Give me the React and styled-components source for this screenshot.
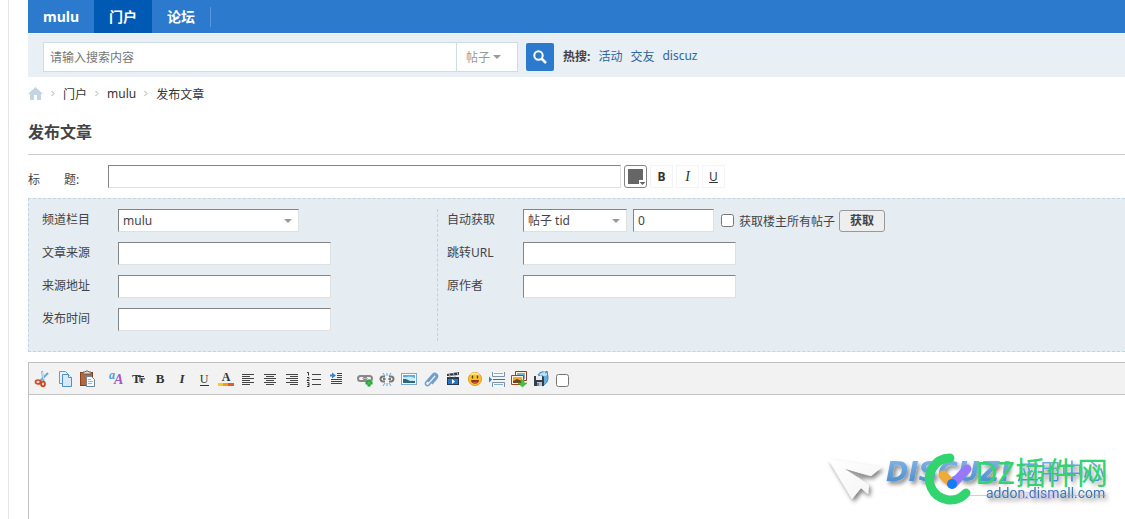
import React from 'react';
import styled, { createGlobalStyle } from 'styled-components';

const GlobalStyle = createGlobalStyle`
  * {
    box-sizing: border-box;
  }
  body {
    margin: 0;
    background: #fff;
    color: #444;
  }
  body, input, select, button {
    font-family: "Noto Sans", "Noto Sans CJK SC", sans-serif;
    font-size: 12px;
  }
  a {
    text-decoration: none;
  }
`;

const Page = styled.div`
  display: flex;
  flex-direction: column;
  min-height: 100vh;
  margin-left: 8px;
  padding-left: 19px;
  border-left: 1px solid #e5e5e5;
`;

const Nav = styled.nav`
  display: flex;
  height: 33px;
  background: #2b7acd;
`;
const NavLink = styled.a`
  padding: 0 15px;
  background: ${({ $active }) => ($active ? '#005ab4' : 'transparent')};
  color: #fff;
  font-size: 14px;
  font-weight: 700;
  line-height: 33px;
`;
const NavLine = styled.span`
  height: 20px;
  margin-top: 7px;
  border-left: 1px solid #5b97db;
`;

const SearchBar = styled.form`
  display: flex;
  align-items: center;
  height: 43px;
  margin-top: 1px;
  padding: 2px 15px 0;
  background: #e8eff5;
`;
const SearchBox = styled.div`
  display: flex;
  flex: 0 1 475px;
  height: 30px;
  border: 1px solid #cddde3;
  background: #fff;
`;
const SearchInput = styled.input`
  flex: 1;
  min-width: 0;
  padding: 2px 6px 0;
  border: 0;
  outline: none;
  background: none;

  &::placeholder {
    color: #757575;
  }
`;
const SelectWrap = styled.span`
  position: relative;
  display: block;
  width: ${({ $width }) => $width};

  &::after {
    content: '';
    position: absolute;
    top: 50%;
    right: ${({ $arrow }) => $arrow || '7px'};
    margin-top: -2px;
    border: 4px solid transparent;
    border-top-color: #999;
    border-bottom: 0;
    pointer-events: none;
  }
`;
const SearchType = styled.select`
  width: 100%;
  height: 28px;
  padding: 2px 9px 0;
  border: 0;
  border-left: 1px solid #cddde3;
  appearance: none;
  background: #fff;
  color: #999;
`;
const SearchBtn = styled.button`
  display: flex;
  align-items: center;
  justify-content: center;
  width: 28px;
  height: 28px;
  margin: 0 9px 0 8px;
  padding: 0;
  border: 0;
  border-radius: 2px;
  background: #2b7acd;
`;
const HotWords = styled.div`
  display: flex;
  gap: 8px;
  padding-bottom: 2px;
  white-space: nowrap;

  strong {
    color: #444;
  }
  a {
    color: #369;
  }
`;

const Crumbs = styled.nav`
  display: flex;
  align-items: center;
  gap: 8px;
  height: 33px;

  a {
    color: #333;
  }
  svg {
    display: block;
  }
`;
const Title = styled.h1`
  margin: 0;
  padding: 8px 0 7px;
  border-bottom: 1px solid #ccc;
  font-size: 16px;
  line-height: 29px;
`;

const TitleRow = styled.div`
  display: flex;
  align-items: center;
  gap: 3px;
  padding: 10px 0;

  label {
    flex: 0 0 77px;
    padding-top: 4px;
    white-space: pre;
  }
`;
const TextInput = styled.input`
  width: ${({ $width }) => $width || '213px'};
  max-width: 100%;
  height: 23px;
  padding: 0 4px;
  border: 1px solid;
  border-color: #848484 #e0e0e0 #e0e0e0 #848484;
  border-radius: 0;
  outline: none;
  background: #fff;
  color: #444;
`;
const TitleInput = styled(TextInput)`
  flex: 0 1 513px;
  min-width: 0;
`;
const ColorBtn = styled.button`
  width: 23px;
  height: 23px;
  padding: 0;
  border: 1px solid #848484;
  border-radius: 3px;
  background: #fff;

  svg {
    display: block;
  }
`;
const StyleBtn = styled.button`
  width: 23px;
  height: 23px;
  padding: 0;
  border: 1px solid #f1f5fa;
  background: #fff;
  color: #333;
  font-weight: ${({ $bold }) => ($bold ? 700 : 400)};

  i {
    font-family: "Liberation Serif", serif;
    font-size: 14px;
  }
`;

const Panel = styled.div`
  display: grid;
  grid-template-columns: minmax(0, 395px) 1fr;
  padding: 10px 0 10px 13px;
  border: 1px dashed #c2d5e3;
  border-right: 0;
  background: #e5ecf2;
`;
const Column = styled.div`
  display: flex;
  flex-direction: column;
  gap: 10px;
  min-height: 132px;

  & + & {
    padding-left: 9px;
    border-left: 1px dashed #cdcdcd;
  }
`;
const Field = styled.div`
  display: flex;
  align-items: center;
  height: 23px;

  > label:first-child {
    flex: 0 0 76px;
    padding-bottom: 4px;
  }
`;
const Select = styled.select`
  width: 100%;
  height: 23px;
  padding: 0 4px;
  border: 1px solid;
  border-color: #848484 #e0e0e0 #e0e0e0 #848484;
  border-radius: 0;
  appearance: none;
  background: #fff;
  color: #444;
`;
const TidInput = styled(TextInput)`
  margin: 0 7px 0 6px;
`;
const Check = styled.label`
  display: flex;
  align-items: center;
  gap: 5px;
  white-space: nowrap;
`;
const Checkbox = styled.input`
  width: 13px;
  height: 13px;
  margin: 0;
`;
const FetchBtn = styled.button`
  height: 22px;
  margin-left: 4px;
  padding: 0 10px;
  border: 1px solid #999;
  border-radius: 3px;
  background: #eee;
  color: #444;
  font-weight: 700;
  line-height: 20px;
`;

const Editor = styled.div`
  display: flex;
  flex: 1;
  flex-direction: column;
  margin-top: 10px;
  border: 1px solid #c2c2c2;
  border-width: 1px 0 0 1px;
`;
const Toolbar = styled.div`
  display: flex;
  align-items: center;
  gap: 7px;
  height: 32px;
  padding-left: 3px;
  border-bottom: 1px solid #c2c2c2;
  background: #f2f2f2;
`;
const ToolGroup = styled.div`
  display: flex;
`;
const Tool = styled.button`
  display: flex;
  align-items: center;
  justify-content: center;
  width: 22px;
  height: 22px;
  padding: 0;
  border: 0;
  background: none;

  svg {
    overflow: visible;
  }
`;
const SourceCheck = styled(Checkbox)`
  margin: 3px 0 0 -3px;
`;
const Content = styled.div`
  position: relative;
  flex: 1;
  min-height: 124px;
`;
const Watermark = styled.svg`
  position: absolute;
  right: 0;
  bottom: 0;
`;

const serif = '"Liberation Serif", serif';

const alignLines = {
  left: ['M2 3.5h12', 'M2 5.5h8', 'M2 7.5h12', 'M2 9.5h8', 'M2 11.5h12', 'M2 13.5h8'],
  center: ['M2 3.5h12', 'M4 5.5h8', 'M2 7.5h12', 'M4 9.5h8', 'M2 11.5h12', 'M4 13.5h8'],
  right: ['M2 3.5h12', 'M6 5.5h8', 'M2 7.5h12', 'M6 9.5h8', 'M2 11.5h12', 'M6 13.5h8'],
};

const icons = {
  cut: (
    <>
      <path d="M7 0l1.500 10" stroke="#82b4dc" strokeWidth="2" />
      <path d="M13 2L5 10" stroke="#6ea6d6" strokeWidth="2" />
      <path d="M7.500 1l1 7" stroke="#d9edfa" />
      <ellipse cx="3" cy="11" rx="2.500" ry="2" fill="#fbdccd" stroke="#cf451d" strokeWidth="1.700" />
      <ellipse cx="8" cy="13" rx="2" ry="2.300" fill="#fbdccd" stroke="#cf451d" strokeWidth="1.700" />
    </>
  ),
  copy: (
    <>
      <path d="M2.500 .5h6l3 3v9h-9z" fill="#e5f2fd" stroke="#5d9bd3" />
      <path d="M5.500 3.500h6l3 3v9h-9z" fill="#d6eafb" stroke="#4e8fca" />
      <path d="M11.500 3.500v3h3" fill="#fff" stroke="#4e8fca" />
    </>
  ),
  paste: (
    <>
      <rect x="1.500" y="1.500" width="12" height="13" fill="#b4673a" stroke="#824421" />
      <path d="M4 3V1h2l1-1h2l1 1h2v2z" fill="#ddd" stroke="#77604c" />
      <path d="M7.500 5.500h5l3 3v7h-8z" fill="#f5faff" stroke="#748596" />
      <path d="M9 8.500h3M9 10.500h5M9 12.500h4" stroke="#9db7cc" />
    </>
  ),
  font: (
    <>
      <text x="1" y="8" fill="#4aa0db" fontSize="12" fontWeight="700" fontStyle="italic" fontFamily={serif}>a</text>
      <text x="6" y="13" fill="#a45ac0" fontSize="14" fontWeight="700" fontStyle="italic" fontFamily={serif}>A</text>
    </>
  ),
  size: (
    <g fill="#333" fontWeight="700" fontFamily={serif}>
      <text x="2" y="12" fontSize="13">T</text>
      <text x="10" y="12" fontSize="11">r</text>
      <path d="M8 5.500h6M10 5v6" stroke="#333" />
    </g>
  ),
  bold: <text x="8" y="12" textAnchor="middle" fill="#333" fontSize="13" fontWeight="700" fontFamily={serif}>B</text>,
  italic: <text x="8" y="12" textAnchor="middle" fill="#333" fontSize="13" fontStyle="italic" fontWeight="700" fontFamily={serif}>I</text>,
  underline: (
    <>
      <text x="8" y="12" textAnchor="middle" fill="#333" fontSize="12" fontFamily={serif}>U</text>
      <path d="M4 14.500h9" stroke="#333" />
    </>
  ),
  color: (
    <>
      <text x="8" y="10" textAnchor="middle" fill="#333" fontSize="12" fontWeight="700" fontFamily={serif}>A</text>
      <path d="M0 13.500h6" stroke="#fbc72c" strokeWidth="3" />
      <path d="M5 13.500h6" stroke="#f49a23" strokeWidth="3" />
      <path d="M10 13.500h6" stroke="#ea5b20" strokeWidth="3" />
    </>
  ),
  left: <path d={alignLines.left.join('')} stroke="#444" />,
  center: <path d={alignLines.center.join('')} stroke="#444" />,
  right: <path d={alignLines.right.join('')} stroke="#444" />,
  list: (
    <>
      <path d="M6 3.500h9M6 8.500h9M6 13.500h9" stroke="#444" />
      <path d="M1 1.500h1.500v3M1 6.500h2v1l-2 2h2.500M1 11.500h2v4h-2M1.500 13.500h1.500" stroke="#333" />
    </>
  ),
  indent: (
    <>
      <path d="M9 2.500h5M9 4.500h5M9 6.500h5M3 8.500h11M3 10.500h11M3 12.500h11" stroke="#444" />
      <path d="M2 4.500h3" stroke="#3d7fcb" strokeWidth="2" />
      <path d="M4 1.500l4 3-4 3z" fill="#3d7fcb" />
    </>
  ),
  link: (
    <>
      <rect x="1" y="5" width="8" height="5" rx="2.500" stroke="#888" strokeWidth="2" />
      <rect x="7" y="5" width="8" height="5" rx="2.500" stroke="#888" strokeWidth="2" />
      <path d="M5 7.500h6" stroke="#bbb" />
      <path d="M12 8.500v7M8.500 12h7" stroke="#1d9b2e" strokeWidth="3" />
      <path d="M12 9.500v5M9.500 12h5" stroke="#46ce4d" />
    </>
  ),
  unlink: (
    <>
      <path d="M6 5.500H4a2.500 2.500 0 0 0 0 5H6M10 5.500h2a2.500 2.500 0 0 1 0 5H10M4 8h2.500M9.500 8H12" stroke="#777" strokeWidth="2" />
      <path d="M4 2l2 3M8 2v3M12 2l-2 3M4 15l2-3M8 15v-3M12 15l-2-3" stroke="#67a7df" />
    </>
  ),
  image: (
    <>
      <rect x=".5" y="2.500" width="15" height="11" fill="#fff" stroke="#7fa9c8" />
      <path d="M2 4h12v8H2z" fill="#5badde" />
      <path d="M2 6c4 1 6-2 12 1v3H2z" fill="#c9eaf7" />
      <path d="M2 8l3 0 4 2 5 0v2H2z" fill="#286986" />
    </>
  ),
  attach: (
    <path
      d="M5 11l6-7c1-1 3 1 2 2l-7 8c-2 2-5-1-3-3l7-8c2-2 6 1 4 4l-5 6"
      stroke="#709fca"
      strokeWidth="1.500"
    />
  ),
  video: (
    <>
      <path d="M2 3l12-2v3L2 5zM2 6h12v8H2z" fill="#29394d" />
      <path d="M4 3l1 2M8 2l1 2M12 1l1 3M4 6l2-1M9 6l2-1" stroke="#bbb" />
      <rect x="3" y="8" width="10" height="5" fill="#2777c4" />
      <path d="M7 8l3 2.500L7 13z" fill="#fff" />
    </>
  ),
  smile: (
    <>
      <circle cx="8" cy="8" r="6.500" fill="#fac52c" stroke="#e7951f" />
      <path d="M4 4c2-2 6-2 8 0" stroke="#ffeb8e" strokeWidth="2" />
      <path d="M5.500 4.500v3M10.500 4.500v3" stroke="#6b3b11" strokeWidth="1.500" />
      <path d="M4 9h8c0 5-8 5-8 0z" fill="#873b18" />
      <path d="M6 12c1-1 3-1 4 0" stroke="#e85942" />
    </>
  ),
  page: (
    <>
      <path d="M3.500 1v4.500h12V1M3.500 16v-4.500h12V16" fill="#f5faff" stroke="#7891a8" />
      <path d="M5 2.500h9M5 13.500h9" stroke="#83afd3" />
      <path d="M4 8.500h12" stroke="#506b84" />
      <path d="M0 5.500l3 3-3 3z" fill="#327bc4" />
    </>
  ),
  album: (
    <>
      <path d="M4.500 .5h11v9h-11z" fill="#fff1d3" stroke="#953a1e" />
      <path d="M6 2h8v6H6z" fill="#76b1d7" />
      <path d="M.5 4.500h12v9H.5z" fill="#fff4d8" stroke="#9d461f" />
      <path d="M2 6h9v6H2z" fill="#f4a435" />
      <path d="M2 10l4-2 5 2v2H2z" fill="#714721" />
      <path d="M10 9h3v3h3l-4.500 4L7 12h3z" fill="#42c63c" stroke="#2c9f2b" strokeWidth=".5" />
    </>
  ),
  save: (
    <>
      <path d="M5 4c2-4 6-3 8-3l1-1 1 6c0 5-2 7-6 9V5z" fill="#6aadde" stroke="#3b80b9" />
      <path d="M7 4l4-2v2l3-1" stroke="#b7e4fc" strokeWidth="2" />
      <path d="M1 5h9l1 1v9H1z" fill="#353e49" />
      <path d="M3 5h6v4H3z" fill="#e7edf2" />
      <path d="M4 11h5v4H4z" fill="#bac5d0" />
      <path d="M5 12v3" stroke="#353e49" />
    </>
  ),
};

const groups = [
  [['cut', '剪切'], ['copy', '复制'], ['paste', '粘贴']],
  [
    ['font', '字体'],
    ['size', '字号'],
    ['bold', '粗体'],
    ['italic', '斜体'],
    ['underline', '下划线'],
    ['color', '文字颜色'],
    ['left', '左对齐'],
    ['center', '居中'],
    ['right', '右对齐'],
    ['list', '列表'],
    ['indent', '缩进'],
  ],
  [
    ['link', '添加链接'],
    ['unlink', '移除链接'],
    ['image', '图片'],
    ['attach', '附件'],
    ['video', '视频'],
    ['smile', '表情'],
    ['page', '分页'],
    ['album', '下载远程图片'],
    ['save', '保存'],
  ],
];

const CrumbArrow = () => (
  <svg width="4" height="7" viewBox="0 0 4 7" fill="none">
    <path d="M.5 1L3 3.500.5 6" stroke="#aaa" />
  </svg>
);

function Brand() {
  return (
    <Watermark width="315" height="79" viewBox="0 0 315 79" fill="none">
      <defs>
        <linearGradient id="plane" x1="0" y1="0" x2="1" y2="1">
          <stop offset="0" stopColor="#fff" />
          <stop offset="1" stopColor="#f4f4f4" />
        </linearGradient>
        <linearGradient id="word" x1="0" y1="0" x2="0" y2="1">
          <stop offset="0" stopColor="#86b9ea" />
          <stop offset="1" stopColor="#4387ca" />
        </linearGradient>
        <filter id="shadow" x="-20%" y="-30%" width="140%" height="180%">
          <feDropShadow dx="2" dy="3" stdDeviation="2" floodColor="#000" floodOpacity=".5" />
        </filter>
      </defs>
      <g filter="url(#shadow)">
        <path d="M18 19l54 8-11 9-26-7 24 16-1 9-7-6-9 11z" fill="url(#plane)" />
        <path d="M35 29l23 7-8 0z" fill="#999" />
        <g fill="url(#word)">
          <text x="76" y="41" fontFamily='"DejaVu Sans", sans-serif' fontSize="27" fontWeight="700" fontStyle="italic">DISCUZ!</text>
          <text x="207" y="39" fontFamily='"Noto Sans CJK SC", sans-serif' fontSize="22">应用中心</text>
        </g>
      </g>
      <path d="M140 18a21 21 0 1 0 16 35" stroke="#32d470" strokeWidth="9" strokeLinecap="round" />
      <path d="M133 35l9 9" stroke="#efaa37" strokeWidth="9" strokeLinecap="round" />
      <path d="M157 29l-14 15" stroke="#9777fa" strokeWidth="9" strokeLinecap="round" />
      <circle cx="142" cy="44" r="5" fill="#147df5" />
      <text x="165" y="44" fill="#32d470" fontFamily='"Noto Sans", "Noto Sans CJK SC", sans-serif' fontSize="31">DZ插件网</text>
      <text x="176" y="58" fill="#3c75b0" fontFamily="Roboto, sans-serif" fontSize="14" filter="url(#shadow)">addon.dismall.com</text>
      <path d="M158 55.500h46M252 55.500h44" stroke="#b18cff" opacity=".5" />
      <text x="208" y="59" fill="#b18cff" opacity=".5" fontFamily='"Noto Sans", sans-serif' fontSize="9">DZ-X.NET</text>
    </Watermark>
  );
}

function App() {
  return (
    <>
      <GlobalStyle />
      <Page>
        <Nav>
          <NavLink href="#">mulu</NavLink>
          <NavLink href="#" $active>门户</NavLink>
          <NavLink href="#">论坛</NavLink>
          <NavLine />
        </Nav>
        <SearchBar>
          <SearchBox>
            <SearchInput type="text" placeholder="请输入搜索内容" aria-label="搜索内容" />
            <SelectWrap $width="61px" $arrow="16px">
              <SearchType aria-label="搜索类型">
                <option>帖子</option>
              </SearchType>
            </SelectWrap>
          </SearchBox>
          <SearchBtn type="button" aria-label="搜索">
            <svg width="16" height="16" viewBox="0 0 16 16" fill="none" stroke="#fff">
              <circle cx="6.500" cy="6.500" r="4.200" strokeWidth="2" />
              <path d="M9.500 9.500l4.500 4.500" strokeWidth="2.500" />
            </svg>
          </SearchBtn>
          <HotWords>
            <strong>热搜:</strong>
            <a href="#">活动</a>
            <a href="#">交友</a>
            <a href="#">discuz</a>
          </HotWords>
        </SearchBar>
        <Crumbs>
          <a href="#" aria-label="首页">
            <svg width="15" height="13" viewBox="0 0 15 13">
              <path d="M7.500 0L15 7h-2v6H9V8H6v5H2V7H0z" fill="#c3d5e2" />
            </svg>
          </a>
          <CrumbArrow />
          <a href="#">门户</a>
          <CrumbArrow />
          <a href="#">mulu</a>
          <CrumbArrow />
          <a href="#">发布文章</a>
        </Crumbs>
        <Title>发布文章</Title>
        <TitleRow>
          <label htmlFor="title">标　　题:</label>
          <TitleInput id="title" type="text" />
          <ColorBtn type="button" aria-label="标题颜色">
            <svg width="21" height="21" viewBox="0 0 21 21">
              <path d="M3 3h15v11h-4v4H3z" fill="#666" />
              <path d="M14.500 16h6l-3 3z" fill="#666" />
            </svg>
          </ColorBtn>
          <StyleBtn type="button" $bold>B</StyleBtn>
          <StyleBtn type="button"><i>I</i></StyleBtn>
          <StyleBtn type="button"><u>U</u></StyleBtn>
        </TitleRow>
        <Panel>
          <Column>
            <Field>
              <label htmlFor="catid">频道栏目</label>
              <SelectWrap $width="181px">
                <Select id="catid">
                  <option>mulu</option>
                </Select>
              </SelectWrap>
            </Field>
            <Field>
              <label htmlFor="from">文章来源</label>
              <TextInput id="from" type="text" />
            </Field>
            <Field>
              <label htmlFor="fromurl">来源地址</label>
              <TextInput id="fromurl" type="text" />
            </Field>
            <Field>
              <label htmlFor="dateline">发布时间</label>
              <TextInput id="dateline" type="text" />
            </Field>
          </Column>
          <Column>
            <Field>
              <label htmlFor="idtype">自动获取</label>
              <SelectWrap $width="104px">
                <Select id="idtype">
                  <option>帖子 tid</option>
                </Select>
              </SelectWrap>
              <TidInput type="text" defaultValue="0" aria-label="tid" $width="81px" />
              <Check>
                <Checkbox type="checkbox" />
                获取楼主所有帖子
              </Check>
              <FetchBtn type="button">获取</FetchBtn>
            </Field>
            <Field>
              <label htmlFor="url">跳转URL</label>
              <TextInput id="url" type="text" />
            </Field>
            <Field>
              <label htmlFor="author">原作者</label>
              <TextInput id="author" type="text" />
            </Field>
          </Column>
        </Panel>
        <Editor>
          <Toolbar>
            {groups.map((group) => (
              <ToolGroup key={group[0][0]}>
                {group.map(([name, label]) => (
                  <Tool key={name} type="button" aria-label={label}>
                    <svg width="16" height="16" viewBox="0 0 16 16" fill="none">{icons[name]}</svg>
                  </Tool>
                ))}
              </ToolGroup>
            ))}
            <SourceCheck type="checkbox" aria-label="源码" />
          </Toolbar>
          <Content>
            <Brand />
          </Content>
        </Editor>
      </Page>
    </>
  );
}

export default App;
